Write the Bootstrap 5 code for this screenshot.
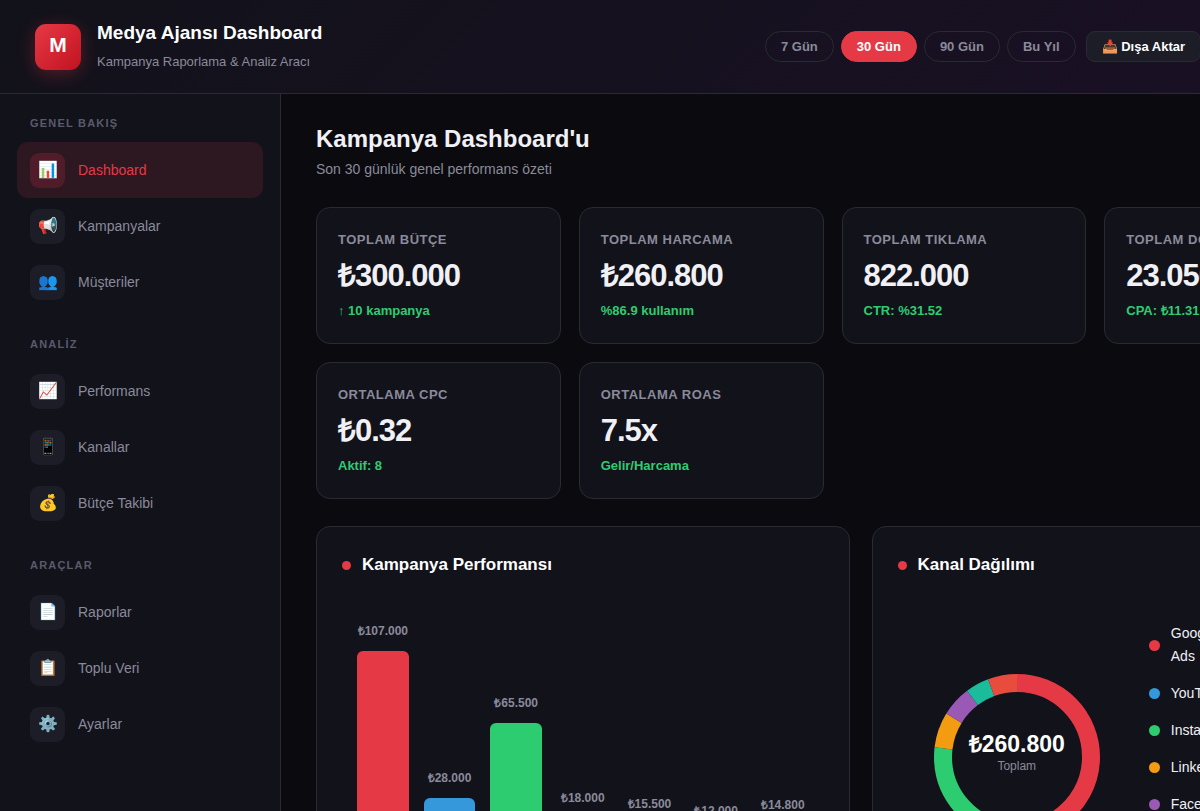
<!DOCTYPE html>
<html lang="tr" data-bs-theme="dark">
<head>
<meta charset="utf-8">
<meta name="viewport" content="width=device-width, initial-scale=1">
<title>Medya Ajansı Dashboard</title>
<link href="https://cdn.jsdelivr.net/npm/bootstrap@5.3.0/dist/css/bootstrap.min.css" rel="stylesheet">
<style>
:root{--ink:#f0f0f5;--dim:#8a8a9a;--faint:#5a5a6a;--panel:#12121a;--tile:#1c1d26;--line:#2a2a32;--red:#e63946;--blue:#3498db;--green:#2ecc71;--orange:#f39c12;--purple:#9b59b6;--teal:#1abc9c;--coral:#e74c3c}
body{background:#0a0a0f;color:var(--ink);font-family:"Liberation Sans",Arial,sans-serif;font-size:14px;line-height:23px}
.app{min-width:1384px}
.topbar{background:linear-gradient(135deg,#12121a,#1a1025);border-bottom:1px solid var(--line);padding:20px 183px 19px 35px}
.logo{width:46px;height:46px;border-radius:11px;background:linear-gradient(135deg,#e63946,#c1121f);box-shadow:0 4px 18px rgba(230,57,70,.3);font-size:21px;line-height:42px;padding-bottom:4px;font-weight:700;color:#fff}
.brand h1{font-size:19px;line-height:26px;font-weight:700;margin:0 0 4px}
.brand p{font-size:13px;line-height:24px;color:var(--dim);margin:0}
.actions{padding-bottom:1px}
.periods{gap:7px}
.pill,.export{height:31px;font-size:13px;line-height:19px;font-weight:700;padding:5px 15px;white-space:nowrap}
.pill{border:1px solid var(--line);border-radius:18px;background:transparent;color:var(--dim)}
.pill.active{background:var(--red);border-color:var(--red);color:#fff}
.export{border:1px solid var(--line);border-radius:9px;background:var(--tile);color:#fff;margin-left:10px}
.sidebar{width:281px;background:var(--panel);border-right:1px solid var(--line);padding:20px 17px}
.sidebar section{margin-bottom:25px}
.sidebar h2{font-size:11px;line-height:18px;font-weight:700;letter-spacing:.11em;color:var(--faint);margin:0 0 10px 13px}
.side-link{height:56px;padding:0 13px;gap:13px;border-radius:11px;color:var(--dim);text-decoration:none}
.side-link.active{background:#2d1720;color:var(--red)}
.side-icon{width:35px;height:35px;border-radius:9px;background:var(--tile);font-size:16px;line-height:34px}
.side-link.active .side-icon{background:#501c29}
.content{padding:31px 35px}
.content>h2{font-size:24px;line-height:28px;font-weight:700;color:var(--ink);margin:0 0 5px}
.content>p{color:var(--dim);margin:0 0 26px}
.stats{display:grid;grid-template-columns:repeat(4,1fr);gap:18px;margin-bottom:27px}
.box{background:var(--panel);border:1px solid var(--line);border-radius:14px}
.stat{height:137px;padding:21px}
.stat h3{font-size:13px;line-height:22px;font-weight:700;letter-spacing:.5px;color:var(--dim);margin:0;white-space:nowrap}
.stat strong{display:block;font-size:31px;line-height:50px;letter-spacing:-1px}
.stat span{display:block;font-size:13px;line-height:20px;font-weight:700;color:var(--green)}
.charts{display:grid;grid-template-columns:19fr 17fr;gap:22px}
.chart-box{padding:25px}
.chart-box h3{font-size:17px;line-height:26px;font-weight:700;gap:11px;margin:0 0 26px}
.dot{width:9px;height:9px;border-radius:50%;background:var(--red);flex:none}
.plot{height:306px}
.bars{gap:15px;padding:0 15px 46px}
.bar-col{flex:1 1 0;min-width:0}
.bar-col span{font-size:12px;line-height:18px;font-weight:700;color:var(--dim);margin-bottom:11px;white-space:nowrap}
.bar-fill{width:100%;border-radius:6px 6px 0 0}
.share{gap:35px}
.ring-wrap{width:194px}
.ring-text strong{font-size:23px;line-height:26px;color:#fff}
.ring-text span{font-size:12px;line-height:18px;color:var(--dim)}
.legend-list{width:152px;gap:14px;padding-bottom:2px}
.legend-list li{gap:11px}
.legend-list .dot{width:11px;height:11px}
.legend-name{width:64px}
</style>
</head>
<body>
<div class="app min-vh-100 d-flex flex-column">
<header class="topbar d-flex align-items-center justify-content-between">
  <div class="brand d-flex align-items-center gap-3">
    <div class="logo text-center">M</div>
    <div><h1>Medya Ajansı Dashboard</h1><p>Kampanya Raporlama &amp; Analiz Aracı</p></div>
  </div>
  <div class="actions d-flex align-items-center">
    <div class="periods d-flex">
      <button type="button" class="pill">7 Gün</button>
      <button type="button" class="pill active">30 Gün</button>
      <button type="button" class="pill">90 Gün</button>
      <button type="button" class="pill">Bu Yıl</button>
    </div>
    <button type="button" class="export">📥 Dışa Aktar</button>
  </div>
</header>
<div class="d-flex flex-grow-1">
  <nav class="sidebar flex-shrink-0" aria-label="Ana menü">
    <section><h2>GENEL BAKIŞ</h2>
      <a href="#" class="side-link active d-flex align-items-center"><span class="side-icon text-center">📊</span>Dashboard</a>
      <a href="#" class="side-link d-flex align-items-center"><span class="side-icon text-center">📢</span>Kampanyalar</a>
      <a href="#" class="side-link d-flex align-items-center"><span class="side-icon text-center">👥</span>Müşteriler</a>
    </section>
    <section><h2>ANALİZ</h2>
      <a href="#" class="side-link d-flex align-items-center"><span class="side-icon text-center">📈</span>Performans</a>
      <a href="#" class="side-link d-flex align-items-center"><span class="side-icon text-center">📱</span>Kanallar</a>
      <a href="#" class="side-link d-flex align-items-center"><span class="side-icon text-center">💰</span>Bütçe Takibi</a>
    </section>
    <section><h2>ARAÇLAR</h2>
      <a href="#" class="side-link d-flex align-items-center"><span class="side-icon text-center">📄</span>Raporlar</a>
      <a href="#" class="side-link d-flex align-items-center"><span class="side-icon text-center">📋</span>Toplu Veri</a>
      <a href="#" class="side-link d-flex align-items-center"><span class="side-icon text-center">⚙️</span>Ayarlar</a>
    </section>
  </nav>
  <main class="content flex-grow-1">
    <h2>Kampanya Dashboard'u</h2>
    <p>Son 30 günlük genel performans özeti</p>
    <div class="stats">
      <div class="box stat"><h3>TOPLAM BÜTÇE</h3><strong>₺300.000</strong><span>↑ 10 kampanya</span></div>
      <div class="box stat"><h3>TOPLAM HARCAMA</h3><strong>₺260.800</strong><span>%86.9 kullanım</span></div>
      <div class="box stat"><h3>TOPLAM TIKLAMA</h3><strong>822.000</strong><span>CTR: %31.52</span></div>
      <div class="box stat"><h3>TOPLAM DÖNÜŞÜM</h3><strong>23.050</strong><span>CPA: ₺11.31</span></div>
      <div class="box stat"><h3>ORTALAMA CPC</h3><strong>₺0.32</strong><span>Aktif: 8</span></div>
      <div class="box stat"><h3>ORTALAMA ROAS</h3><strong>7.5x</strong><span>Gelir/Harcama</span></div>
    </div>
    <div class="charts">
      <div class="box chart-box">
        <h3 class="d-flex align-items-center"><i class="dot"></i>Kampanya Performansı</h3>
        <div class="plot bars d-flex align-items-end">
          <div class="bar-col d-flex flex-column align-items-center"><span>₺107.000</span><div class="bar-fill" style="height:213px;background:var(--red)"></div></div>
          <div class="bar-col d-flex flex-column align-items-center"><span>₺28.000</span><div class="bar-fill" style="height:66px;background:var(--blue)"></div></div>
          <div class="bar-col d-flex flex-column align-items-center"><span>₺65.500</span><div class="bar-fill" style="height:141px;background:var(--green)"></div></div>
          <div class="bar-col d-flex flex-column align-items-center"><span>₺18.000</span><div class="bar-fill" style="height:46px;background:var(--orange)"></div></div>
          <div class="bar-col d-flex flex-column align-items-center"><span>₺15.500</span><div class="bar-fill" style="height:40px;background:var(--purple)"></div></div>
          <div class="bar-col d-flex flex-column align-items-center"><span>₺12.000</span><div class="bar-fill" style="height:33px;background:var(--teal)"></div></div>
          <div class="bar-col d-flex flex-column align-items-center"><span>₺14.800</span><div class="bar-fill" style="height:39px;background:var(--coral)"></div></div>
        </div>
      </div>
      <div class="box chart-box">
        <h3 class="d-flex align-items-center"><i class="dot"></i>Kanal Dağılımı</h3>
        <div class="plot share d-flex align-items-center justify-content-center">
          <div class="ring-wrap position-relative">
            <svg class="d-block w-100" viewBox="0 0 194 194" fill="none" stroke-width="18" aria-hidden="true">
              <g transform="rotate(-90 97 97)">
                <circle cx="97" cy="97" r="74" pathLength="100" stroke="#e63946" stroke-dasharray="41.03 58.97"/>
                <circle cx="97" cy="97" r="74" pathLength="100" stroke="#3498db" stroke-dasharray="10.74 89.26" stroke-dashoffset="-41.03"/>
                <circle cx="97" cy="97" r="74" pathLength="100" stroke="#2ecc71" stroke-dasharray="25.11 74.89" stroke-dashoffset="-51.77"/>
                <circle cx="97" cy="97" r="74" pathLength="100" stroke="#f39c12" stroke-dasharray="6.9 93.1" stroke-dashoffset="-76.88"/>
                <circle cx="97" cy="97" r="74" pathLength="100" stroke="#9b59b6" stroke-dasharray="5.94 94.06" stroke-dashoffset="-83.78"/>
                <circle cx="97" cy="97" r="74" pathLength="100" stroke="#1abc9c" stroke-dasharray="4.6 95.4" stroke-dashoffset="-89.72"/>
                <circle cx="97" cy="97" r="74" pathLength="100" stroke="#e74c3c" stroke-dasharray="5.68 94.32" stroke-dashoffset="-94.32"/>
              </g>
            </svg>
            <div class="ring-text position-absolute top-50 start-50 translate-middle d-flex flex-column align-items-center pb-2"><strong>₺260.800</strong><span>Toplam</span></div>
          </div>
          <ul class="legend-list list-unstyled d-flex flex-column mb-0">
            <li class="d-flex align-items-center"><i class="dot"></i><span class="legend-name">Google Ads</span></li>
            <li class="d-flex align-items-center"><i class="dot" style="background:var(--blue)"></i><span class="legend-name">YouTube</span></li>
            <li class="d-flex align-items-center"><i class="dot" style="background:var(--green)"></i><span class="legend-name">Instagram</span></li>
            <li class="d-flex align-items-center"><i class="dot" style="background:var(--orange)"></i><span class="legend-name">LinkedIn</span></li>
            <li class="d-flex align-items-center"><i class="dot" style="background:var(--purple)"></i><span class="legend-name">Facebook</span></li>
            <li class="d-flex align-items-center"><i class="dot" style="background:var(--teal)"></i><span class="legend-name">TikTok</span></li>
            <li class="d-flex align-items-center"><i class="dot" style="background:var(--coral)"></i><span class="legend-name">Twitter</span></li>
          </ul>
        </div>
      </div>
    </div>
  </main>
</div>
</div>
<script src="https://cdn.jsdelivr.net/npm/bootstrap@5.3.0/dist/js/bootstrap.bundle.min.js"></script>
</body>
</html>
